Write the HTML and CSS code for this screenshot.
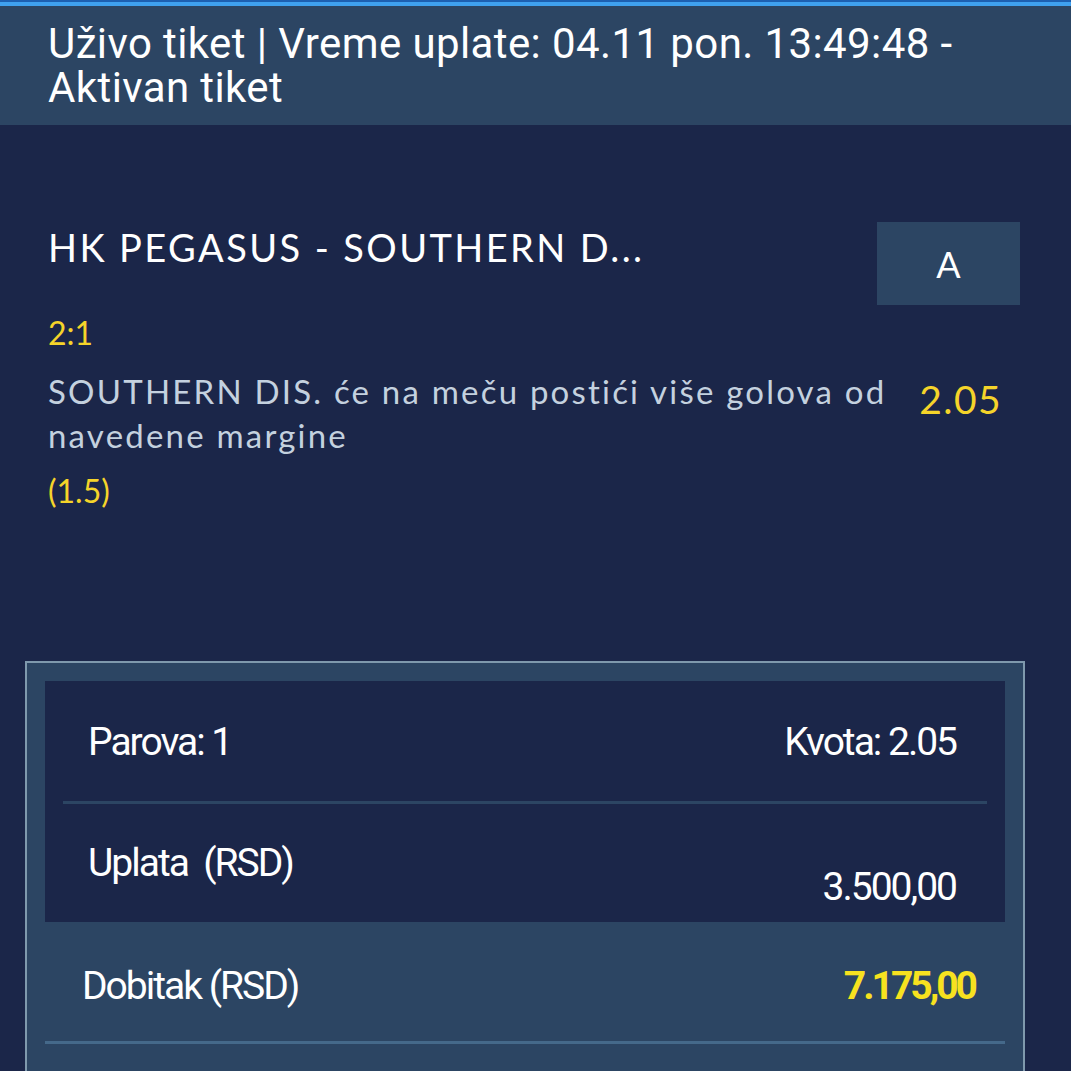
FILE: index.html
```html
<!DOCTYPE html>
<html lang="sr">
<head>
    <meta charset="UTF-8">
    <meta name="viewport" content="width=device-width, initial-scale=1.0">
    <title>Tiket</title>
    <link rel="stylesheet" href="styles.css">
</head>
<body>
    <div class="topline"></div>
    <div class="header">
        Uživo tiket | Vreme uplate: 04.11 pon. 13:49:48 - Aktivan tiket
    </div>
    <div class="event">
        <div class="event-head">
            <div class="match">HK PEGASUS - SOUTHERN D...</div>
            <div class="status">A</div>
        </div>
        <div class="score">2:1</div>
        <div class="pick">
            <div class="pick-text">SOUTHERN DIS. će na meču postići više golova od navedene margine</div>
            <div class="odd">2.05</div>
        </div>
        <div class="margin">(1.5)</div>
    </div>
    <div class="summary">
        <div class="summary-inner">
            <div class="row">
                <span>Parova: 1</span>
                <span>Kvota: 2.05</span>
            </div>
            <div class="sep"></div>
            <div class="row row-stake">
                <span>Uplata&nbsp; (RSD)</span>
                <span class="stake">3.500,00</span>
            </div>
        </div>
        <div class="row row-win">
            <span>Dobitak&nbsp;(RSD)</span>
            <span class="win">7.175,00</span>
        </div>
        <div class="sep sep-win"></div>
    </div>
</body>
</html>
```

FILE: styles.css
```css
body {
    margin: 0;
    padding: 0;
    background-color: #1b2649;
    color: #ffffff;
    font-family: 'Lato', 'Open Sans', sans-serif;
    overflow: hidden;
}
.topline {
    height: 6px;
    background-color: #3fa0ee;
    border-top: 2px solid #1d5fb0;
    box-sizing: border-box;
}
.header {
    background-color: #2c4563;
    padding: 16px 48px 18px;
    font-family: 'Roboto', sans-serif;
    font-size: 42px;
    line-height: 44px;
    letter-spacing: 0.4px;
    height: 119px;
    box-sizing: border-box;
}
.event {
    padding: 96px 51px 0 48px;
    height: 536px;
    box-sizing: border-box;
}
.event-head {
    display: flex;
    justify-content: space-between;
    align-items: flex-start;
}
.match {
    font-size: 38px;
    letter-spacing: 2.4px;
    line-height: 44px;
    padding-top: 4px;
}
.status {
    width: 143px;
    height: 83px;
    background-color: #2c4563;
    display: flex;
    align-items: center;
    justify-content: center;
    font-size: 36px;
    margin-top: 1px;
}
.score {
    color: #f5d42a;
    font-size: 32px;
    margin-top: 8px;
}
.pick {
    display: flex;
    justify-content: space-between;
    align-items: flex-start;
    margin-top: 17px;
}
.pick-text {
    color: #c4d1df;
    font-size: 33px;
    line-height: 44px;
    letter-spacing: 2.2px;
    width: 860px;
}
.odd {
    color: #f5d42a;
    font-size: 39px;
    line-height: 44px;
    letter-spacing: 1.4px;
    margin-top: 8px;
    margin-right: 18px;
}
.margin {
    color: #f5d42a;
    font-size: 32px;
    margin-top: 14px;
}
.summary {
    margin: 0 46px 0 25px;
    border: 2px solid #7f99ad;
    border-bottom: none;
    background-color: #2c4563;
    padding: 18px 18px 40px;
    font-family: 'Roboto', sans-serif;
    letter-spacing: -2px;
}
.summary-inner {
    background-color: #1b2649;
    padding: 0 18px;
}
.row {
    display: flex;
    justify-content: space-between;
    font-size: 39px;
    line-height: 46px;
    padding: 0 31px 0 25px;
}
.summary-inner .row:first-child {
    padding-top: 38px;
    padding-bottom: 36px;
}
.sep {
    height: 3px;
    background-color: #2c4563;
}
.row-stake {
    padding-top: 36px;
    padding-bottom: 12px;
    align-items: flex-start;
}
.stake {
    margin-top: 24px;
}
.row-win {
    padding: 41px 30px 32px 37px;
}
.win {
    color: #f7e21f;
    font-weight: bold;
    letter-spacing: -3px;
}
.sep-win {
    background-color: #45698a;
}
```
